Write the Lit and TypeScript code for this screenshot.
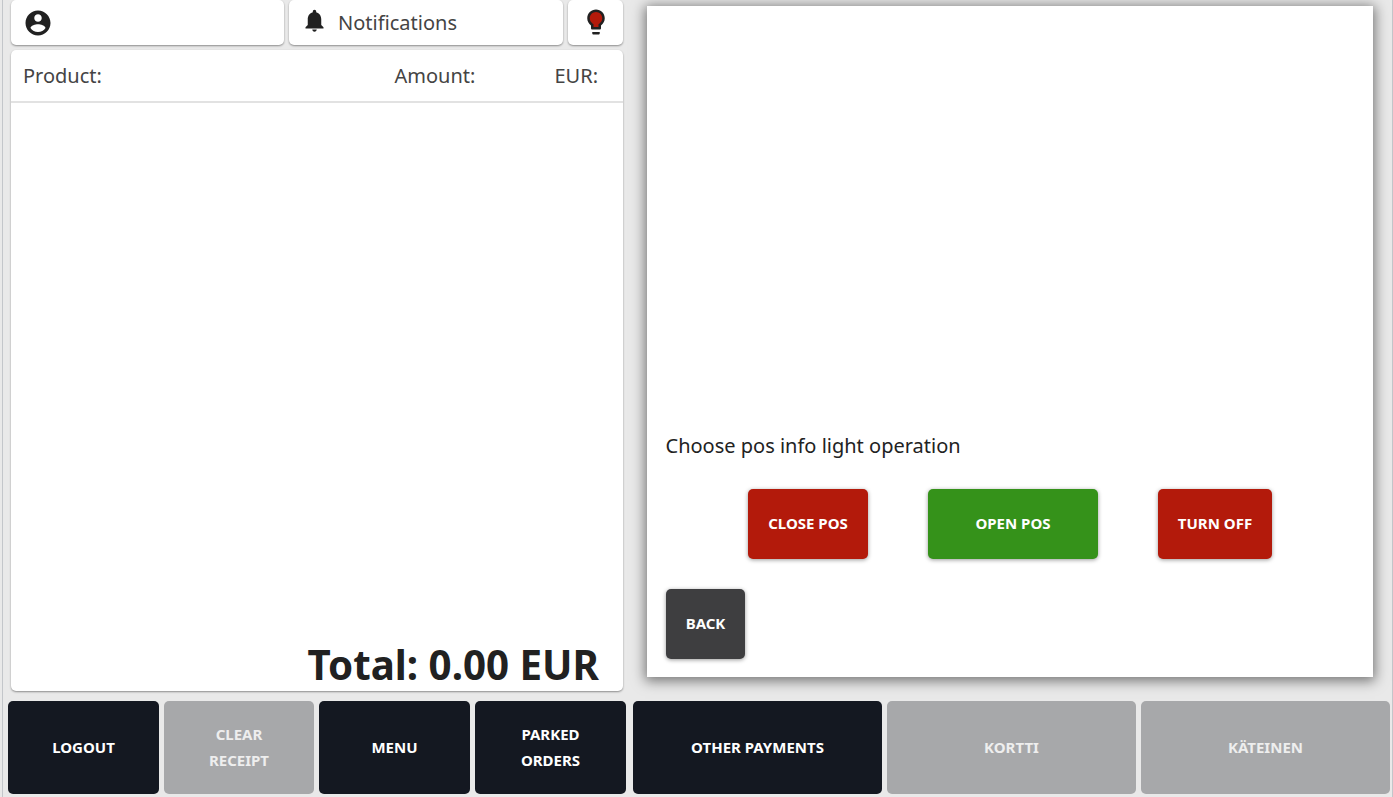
import { LitElement, html, css } from "lit";
import { customElement } from "lit/decorators.js";

@customElement("app-root")
export class AppRoot extends LitElement {
  static styles = css`
    :host {
      display: block; width: 1393px; height: 797px; overflow: hidden;
      background:
        linear-gradient(#c3c6ca, #c3c6ca) 2px 0 / 1px 100% no-repeat,
        linear-gradient(#c3c6ca, #c3c6ca) 1392px 0 / 1px 100% no-repeat,
        #e9e9e9;
      font-family: "Noto Sans", sans-serif; color: #212121;
    }
    .page { height: 797px; display: flex; flex-direction: column; box-sizing: border-box; }
    .main { height: 694px; display: flex; }
    .left { width: 612px; margin-left: 11px; display: flex; flex-direction: column; gap: 5px; }
    .top { display: flex; gap: 5px; height: 45px; }
    .card { background: #fff; border-radius: 5px; box-shadow: 0 1px 2px rgba(0,0,0,.4); display: flex; align-items: center; box-sizing: border-box; }
    .user { width: 273px; padding-left: 12px; }
    .notif { width: 274px; padding-left: 12px; font-size: 20px; gap: 10px; color: #444; }
    .bell { margin-top: -5px; }
    .bulb { width: 55px; justify-content: center; }
    .bulb svg { margin-top: -2px; }
    .receipt { flex: 1; margin-bottom: 3px; flex-direction: column; align-items: stretch; }
    .head { height: 53px; display: flex; align-items: center; border-bottom: 2px solid #e2e2e2; font-size: 20px; padding-left: 12px; color: #444; flex: none; box-sizing: border-box; }
    .head .p { width: 371.5px; }
    .head .a { width: 160px; }
    .body { flex: 1; }
    .total { text-align: right; font-size: 40.3px; font-weight: 700; padding-right: 24px; line-height: 48px; height: 50px; }
    .dialog { margin: 6px 20px 0 24px; width: 726px; height: 671px; background: #fff; box-shadow: 0 2px 12px 2px rgba(0,0,0,.5); display: flex; flex-direction: column; justify-content: flex-end; padding: 0 19px 18px; box-sizing: border-box; }
    .msg { font-size: 20px; color: #222; line-height: 28px; margin-bottom: 29px; margin-left: -0.5px; }
    .actions { display: flex; margin-bottom: 30px; padding-left: 82px; }
    .btn { border-radius: 5px; color: #fff; font-weight: 700; font-size: 15px; height: 70px; padding-bottom: 2px; box-sizing: border-box; display: flex; align-items: center; justify-content: center; box-shadow: 0 1px 4px rgba(0,0,0,.4); }
    .red { background: #b31a0b; }
    .green { background: #35921a; }
    .dark { background: #3e3e40; }
    .c { width: 120px; }
    .o { width: 170px; margin: 0 60px; }
    .t { width: 114px; }
    .b { width: 79px; }
    .bottom { display: flex; gap: 5px; padding-left: 8px; margin-top: 7px; height: 93px; }
    .key { border-radius: 5px; background: #141821; color: #fff; font-weight: 700; font-size: 15px; line-height: 26px; text-align: center; display: flex; align-items: center; justify-content: center; box-sizing: border-box; padding: 0 8px 2px; }
    .off { background: #a7a8aa; color: #eee; }
    .w151 { width: 151px; }
    .w150 { width: 150px; }
    .w249 { width: 249px; }
    .sep { margin-left: 2px; }
    svg { display: block; }
  `;
  render() {
    return html`<div class="page">
      <div class="main">
        <div class="left">
          <div class="top">
            <div class="card user"><svg width="30" height="30" viewBox="0 0 24 24" fill="#212121"><path d="M12 2C6.48 2 2 6.48 2 12s4.48 10 10 10 10-4.48 10-10S17.52 2 12 2zm0 3c1.66 0 3 1.34 3 3s-1.34 3-3 3-3-1.34-3-3 1.34-3 3-3zm0 14.2c-2.5 0-4.71-1.28-6-3.22.03-1.99 4-3.08 6-3.08 1.99 0 5.97 1.09 6 3.08-1.29 1.94-3.5 3.22-6 3.22z"/></svg></div>
            <div class="card notif"><svg class="bell" width="27" height="27" viewBox="0 0 24 24" fill="#212121"><path d="M12 22c1.1 0 2-.9 2-2h-4c0 1.1.89 2 2 2zm6-6v-5c0-3.07-1.64-5.64-4.5-6.32V4c0-.83-.67-1.5-1.5-1.5s-1.5.67-1.5 1.5v.68C7.63 5.36 6 7.92 6 11v5l-2 2v1h16v-1l-2-2z"/></svg><span>Notifications</span></div>
            <div class="card bulb"><svg width="30" height="30" viewBox="0 0 24 24"><path fill="#212121" d="M9 21c0 .55.45 1 1 1h4c.55 0 1-.45 1-1v-1H9v1zm3-19C8.14 2 5 5.14 5 9c0 2.38 1.19 4.47 3 5.74V17c0 .55.45 1 1 1h6c.55 0 1-.45 1-1v-2.26c1.81-1.27 3-3.36 3-5.74 0-3.86-3.14-7-7-7z"/><path fill="#b31a0b" d="M14.85 13.1l-.85.6V16h-4v-2.3l-.85-.6C7.8 12.16 7 10.63 7 9c0-2.76 2.24-5 5-5s5 2.24 5 5c0 1.63-.8 3.16-2.15 4.1z"/></svg></div>
          </div>
          <div class="card receipt">
            <div class="head"><span class="p">Product:</span><span class="a">Amount:</span><span>EUR:</span></div>
            <div class="body"></div>
            <div class="total">Total: 0.00 EUR</div>
          </div>
        </div>
        <div class="dialog">
          <div class="msg">Choose pos info light operation</div>
          <div class="actions"><div class="btn red c">CLOSE POS</div><div class="btn green o">OPEN POS</div><div class="btn red t">TURN OFF</div></div>
          <div class="btn dark b">BACK</div>
        </div>
      </div>
      <div class="bottom">
        <div class="key w151">LOGOUT</div>
        <div class="key off w150">CLEAR<br />RECEIPT</div>
        <div class="key w151">MENU</div>
        <div class="key w151">PARKED<br />ORDERS</div>
        <div class="key w249 sep">OTHER PAYMENTS</div>
        <div class="key off w249">KORTTI</div>
        <div class="key off w249">KÄTEINEN</div>
      </div>
    </div>`;
  }
}
